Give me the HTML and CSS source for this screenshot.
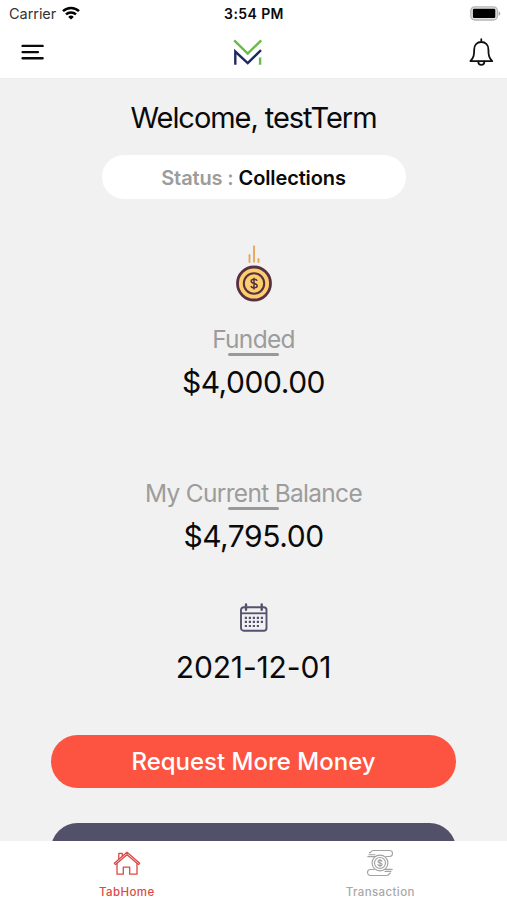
FILE: index.html
```html
<!DOCTYPE html>
<html lang="en">
<head>
    <meta charset="UTF-8">
    <meta name="viewport" content="width=device-width, initial-scale=1.0">
    <title>Home</title>
    <link rel="stylesheet" href="styles.css">
</head>
<body>
    <div class="app">
        <div class="status-bar">
            <div class="carrier">
                <span class="carrier-name">Carrier</span>
                <svg class="wifi" width="18" height="14" viewBox="0 0 18 14" fill="none" stroke="#000" stroke-width="2.5">
                    <path d="M1 5.1a11.6 11.6 0 0 1 16 0"/>
                    <path d="M4 8.4a7.3 7.3 0 0 1 10 0"/>
                    <path d="M9 13.6L6.2 10.9a4 4 0 0 1 5.6 0z" fill="#000" stroke="none"/>
                </svg>
            </div>
            <span class="time">3:54 PM</span>
            <svg class="battery" width="31" height="15" viewBox="0 0 31 15">
                <rect x="0.8" y="0.8" width="26.6" height="13.2" rx="4" fill="#e4e4e4" stroke="#b5b5b5" stroke-width="1.3"/>
                <rect x="2.9" y="2.8" width="22.4" height="9.2" rx="1.2" fill="#000"/>
                <path d="M28.6 5.2c2.2.8 2.2 3.8 0 4.6z" fill="#a5a5a5"/>
            </svg>
        </div>

        <header class="header">
            <svg class="menu-icon" width="23" height="17" viewBox="0 0 23 17" stroke="#0a0a0a" stroke-width="2.4" stroke-linecap="round">
                <path d="M1.6 1.9h20M1.6 8.1h15.3M1.6 14.2h20"/>
            </svg>
            <svg class="logo" width="30" height="27" viewBox="0 0 30 27" fill="none" stroke-width="2.4">
                <path d="M1.2 1.3L14.7 14.6L28.2 1.3M27.1 25.8V18.5" stroke="#64bd45"/>
                <path d="M2.3 25.8V12.6L14.7 24.2L28 11.1" stroke="#1f2a63"/>
            </svg>
            <svg class="bell-icon" width="25" height="29" viewBox="0 0 25 29" fill="none" stroke="#111" stroke-width="1.8" stroke-linejoin="round" stroke-linecap="round">
                <path d="M12.3 1.2V4M12.3 4C8 4 5.2 7 5.2 11.5c0 5.500-.4 8-3.800 11.700h21.800c-3.400-3.700-3.800-6.200-3.800-11.700C19.400 7 16.600 4 12.300 4z"/>
                <path d="M9.200 23.500c.2 4.600 6 4.600 6.200 0"/>
            </svg>
        </header>

        <main class="content">
            <h1 class="welcome">Welcome, testTerm</h1>
            <div class="status-pill"><span class="status-label">Status : </span><span class="status-value">Collections</span></div>

            <svg class="coin-icon" width="38" height="57" viewBox="0 0 38 57" fill="none">
                <path d="M14.500 10v7M19 1.200v15.500M23.500 14v3" stroke="#eba65c" stroke-width="1.900" stroke-linecap="round"/>
                <circle cx="19" cy="38.500" r="16.500" fill="#fdcf6c" stroke="#583044" stroke-width="2.800"/>
                <circle cx="19" cy="38.500" r="10.200" stroke="#583044" stroke-width="2.100"/>
                <path d="M22 35.800c-.5-2.200-5.800-2.200-5.800.4 0 2.900 6 1.700 6 4.600 0 2.600-5.600 2.600-6.200.2M19 32.800v11.600" stroke="#583044" stroke-width="1.500"/>
            </svg>

            <section class="balance funded">
                <h2 class="label">Funded</h2>
                <div class="amount">$4,000.00</div>
            </section>

            <section class="balance current">
                <h2 class="label">My Current Balance</h2>
                <div class="amount">$4,795.00</div>
            </section>

            <svg class="calendar-icon" width="30" height="30" viewBox="0 0 30 30" fill="none" stroke="#55526d">
                <rect x="2" y="4.200" width="25.500" height="23.500" rx="2.800" stroke-width="1.900"/>
                <path d="M2 10.300h25.500" stroke-width="1.800"/>
                <path d="M7 1.500v5.200M22.700 1.500v5.200" stroke-width="2.400" stroke-linecap="round"/>
                <path d="M5.800 14.800h18.500M5.800 18.900h18.500M5.800 23h14.500" stroke-width="2.200" stroke-dasharray="2.200 1.800"/>
            </svg>
            <div class="date">2021-12-01</div>

            <button class="btn btn-request">Request More Money</button>
            <button class="btn btn-secondary"></button>
        </main>

        <nav class="tab-bar">
            <a class="tab active">
                <svg width="28" height="25" viewBox="0 0 28 25" fill="none" stroke="#d94a45" stroke-width="1.300" stroke-linejoin="round" stroke-linecap="round">
                    <path d="M1.300 12.300L14 1.300l12.700 11-1.200 1.100L14 3.700 2.500 13.400z"/>
                    <path d="M4 12.500v10.700h6.300v-7h6.400v7H24V12.500M5.800 7.900V2.300h3.500v2.600"/>
                </svg>
                <span class="tab-label">TabHome</span>
            </a>
            <a class="tab">
                <svg width="28" height="28" viewBox="0 0 28 28" fill="none" stroke="#a3a3a3" stroke-width="1.150" stroke-linecap="round">
                    <path d="M7 1.500h16.500a3 3 0 0 1 0 6H20M7 1.500c-2 0-2 2.400-3.500 2.400M3 5.700h6M1.800 7.600h7"/>
                    <path d="M21 26.500H4.500a3 3 0 0 1 0-6H8M21 26.500c2 0 2-2.400 3.500-2.400M25 22.300h-6M26.200 20.400h-7"/>
                    <circle cx="14" cy="14" r="7.900"/>
                    <circle cx="14" cy="14" r="5.500"/>
                    <path d="M16 12.300c-.4-1.600-4-1.500-4 .2 0 2 4.100 1.100 4.100 3.100 0 1.700-3.800 1.700-4.200 0M14 10.200v7.600"/>
                </svg>
                <span class="tab-label">Transaction</span>
            </a>
        </nav>
    </div>
</body>
</html>
```

FILE: styles.css
```css
* {
    box-sizing: border-box;
    margin: 0;
    padding: 0;
}

body {
    font-family: 'Inter', sans-serif;
    background-color: #fff;
    color: #0a0a0a;
}

svg {
    display: block;
    flex-shrink: 0;
}

.app {
    display: flex;
    flex-direction: column;
    width: 100%;
    height: 900px;
    overflow: hidden;
}

.status-bar {
    display: grid;
    grid-template-columns: 1fr auto 1fr;
    align-items: center;
    height: 27px;
    padding: 0 6px 0 9px;
}

.carrier {
    display: flex;
    align-items: center;
    gap: 6px;
}

.carrier-name {
    font-size: 14.5px;
    letter-spacing: -0.05px;
    color: #333;
}

.wifi {
    margin-bottom: 2px;
}

.time {
    padding-right: 2px;
    font-size: 14px;
    font-weight: 600;
    letter-spacing: 0.4px;
}

.battery {
    justify-self: end;
    margin-bottom: 1px;
}

.header {
    display: grid;
    grid-template-columns: 1fr auto 1fr;
    align-items: center;
    height: 52px;
    padding: 0 13px 0 21px;
    border-bottom: 1px solid #ececec;
}

.logo {
    margin-right: 20px;
}

.bell-icon {
    justify-self: end;
}

.content {
    display: flex;
    flex-direction: column;
    align-items: center;
    flex: 1;
    min-height: 0;
    overflow: hidden;
    background-color: #f1f1f1;
}

.content > * {
    flex-shrink: 0;
}

.welcome {
    margin-top: 21px;
    font-size: 29px;
    font-weight: 400;
    line-height: 36px;
    letter-spacing: -1.05px;
}

.status-pill {
    width: 304px;
    height: 44px;
    margin-top: 19px;
    border-radius: 22px;
    background-color: #fff;
    font-size: 20px;
    font-weight: 600;
    line-height: 46px;
    letter-spacing: -0.12px;
    text-align: center;
    white-space: pre;
}

.status-label {
    color: #9c9c9c;
}

.coin-icon {
    margin-top: 46px;
}

.balance {
    text-align: center;
}

.funded {
    margin-top: 22px;
}

.current {
    margin-top: 78px;
}

.label {
    font-size: 24.5px;
    font-weight: 400;
    line-height: 30px;
    letter-spacing: -0.7px;
    color: #9c9c9c;
}

.label::after {
    content: '';
    display: block;
    width: 51px;
    height: 3px;
    margin: -1px auto 0;
    border-radius: 2px;
    background-color: #999;
}

.amount {
    margin-top: 8px;
    font-size: 30px;
    line-height: 36px;
    letter-spacing: -0.45px;
}

.calendar-icon {
    margin-top: 49px;
}

.date {
    margin-top: 16px;
    font-size: 30px;
    line-height: 36px;
    letter-spacing: -0.15px;
}

.btn {
    width: 405px;
    height: 53px;
    border: none;
    border-radius: 27px;
    color: #fff;
    font-family: inherit;
    font-size: 24px;
    font-weight: 500;
}

.btn-request {
    margin-top: 50px;
    background-color: #fc5441;
}

.btn-secondary {
    margin-top: 35px;
    background-color: #535069;
}

.tab-bar {
    display: flex;
    height: 59px;
    background-color: #fff;
}

.tab {
    display: flex;
    flex: 1;
    flex-direction: column;
    align-items: center;
    justify-content: space-between;
    padding: 8px 0 0;
    color: #a8a8a8;
}

.tab.active {
    padding-top: 10px;
    color: #dc4a44;
}

.tab-label {
    font-size: 11.5px;
    font-weight: 500;
    line-height: 15px;
    letter-spacing: 0.4px;
}
```
